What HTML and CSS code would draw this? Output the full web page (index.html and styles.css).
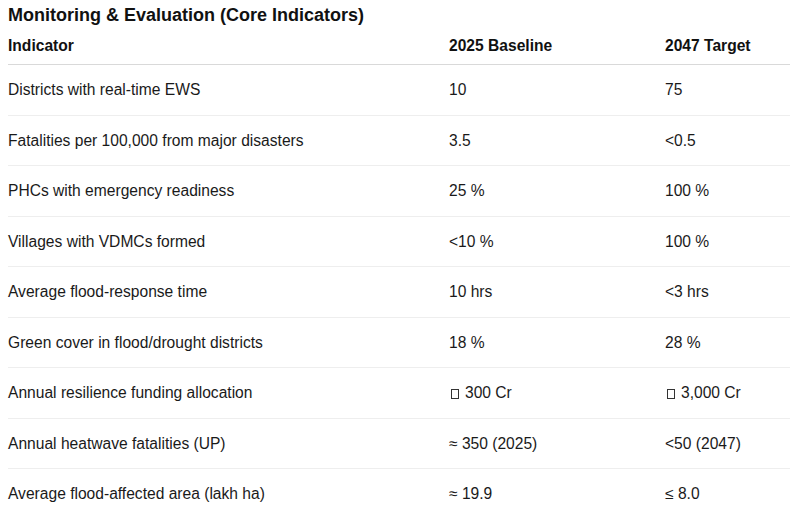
FILE: index.html
```html
<!DOCTYPE html>
<html>
<head>
<meta charset="utf-8">
<link rel="stylesheet" href="styles.css">
</head>
<body>
<div class="page">
  <h2 class="title">Monitoring &amp; Evaluation (Core Indicators)</h2>
  <table class="me-table">
    <colgroup>
      <col class="c1"><col class="c2"><col class="c3">
    </colgroup>
    <thead>
      <tr><th>Indicator</th><th>2025 Baseline</th><th>2047 Target</th></tr>
    </thead>
    <tbody>
      <tr><td>Districts with real-time EWS</td><td>10</td><td>75</td></tr>
      <tr><td>Fatalities per 100,000 from major disasters</td><td>3.5</td><td>&lt;0.5</td></tr>
      <tr><td>PHCs with emergency readiness</td><td>25 %</td><td>100 %</td></tr>
      <tr><td>Villages with VDMCs formed</td><td>&lt;10 %</td><td>100 %</td></tr>
      <tr><td>Average flood-response time</td><td>10 hrs</td><td>&lt;3 hrs</td></tr>
      <tr><td>Green cover in flood/drought districts</td><td>18 %</td><td>28 %</td></tr>
      <tr><td>Annual resilience funding allocation</td><td><span class="tofu"></span>300 Cr</td><td><span class="tofu"></span>3,000 Cr</td></tr>
      <tr><td>Annual heatwave fatalities (UP)</td><td>≈ 350 (2025)</td><td>&lt;50 (2047)</td></tr>
      <tr><td>Average flood-affected area (lakh ha)</td><td>≈ 19.9</td><td>≤ 8.0</td></tr>
    </tbody>
  </table>
</div>
</body>
</html>
```
FILE: styles.css
```css
html, body {
  margin: 0;
  padding: 0;
  background: #fff;
}
body {
  font-family: "Liberation Sans", Arial, sans-serif;
  color: #1a1a1a;
}
.page {
  padding: 5px 0 0 8px;
}
.title {
  margin: 0;
  font-size: 18px;
  line-height: 20px;
  font-weight: bold;
  color: #111;
}
.me-table {
  width: 782px;
  border-collapse: collapse;
  table-layout: fixed;
  font-size: 15.6px;
}
.c1 { width: 441px; }
.c2 { width: 216px; }
.c3 { width: 125px; }
.me-table th {
  text-align: left;
  font-weight: bold;
  color: #111;
  line-height: 20px;
  padding: 10.6px 0 8px 0;
  border-bottom: 1px solid #d9d9d9;
}
.me-table td {
  line-height: 20px;
  padding: 14.75px 0;
  border-bottom: 1px solid #eeeeee;
}
.me-table tbody tr:first-child td {
  padding-top: 15.5px;
}
.me-table tbody tr:last-child td {
  border-bottom: none;
}
.tofu {
  display: inline-block;
  box-sizing: border-box;
  width: 8px;
  height: 10px;
  border: 1px solid #333;
  margin: 0 6px 0 2px;
  vertical-align: -1px;
}
```
